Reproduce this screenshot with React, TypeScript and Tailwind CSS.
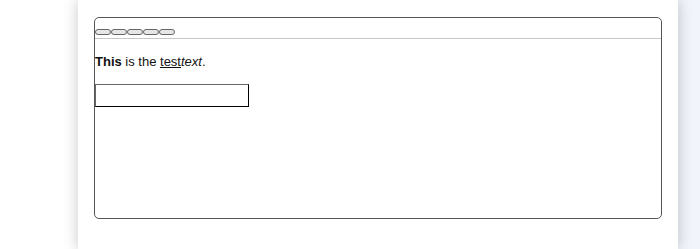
export default function App() {
  return (
    <div className="flex h-[249px] w-[700px] overflow-hidden bg-[#f1f4fb] font-['Liberation_Sans',Arial,sans-serif]">
      <div className="w-[78px] shrink-0 bg-white" />
      <div className="relative w-[600px] shrink-0 bg-white px-4 pt-[17px] shadow-[0_0_14px_rgba(0,0,0,0.22)]">
        <div className="flex h-[202px] flex-col rounded-[5px] border border-[#555]">
          <div className="flex h-[21px] items-end border-b border-[#c8c8c8] pb-[3px]">
            {[0, 1, 2, 3, 4].map((i) => (
              <span
                key={i}
                className="h-[6px] w-[16px] rounded-full border border-[#666] bg-[#e6e6e6]"
              />
            ))}
          </div>
          <p className="mt-[15px] text-[13px] leading-[16px] text-[#111]">
            <b>This</b> is the <u>test</u>
            <i>text</i>.
          </p>
          <input
            type="text"
            className="mt-[14px] h-[23px] w-[154px] border border-t-[#666] border-l-[#666] border-r-black border-b-black bg-white"
          />
        </div>
      </div>
    </div>
  );
}
